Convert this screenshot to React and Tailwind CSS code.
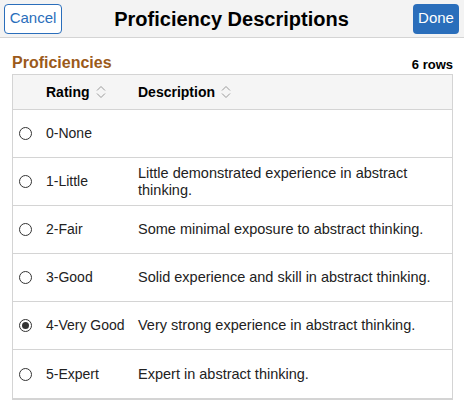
import React from "react";

const rows = [
  { rating: "0-None", desc: "" },
  { rating: "1-Little", desc: "Little demonstrated experience in abstract thinking." },
  { rating: "2-Fair", desc: "Some minimal exposure to abstract thinking." },
  { rating: "3-Good", desc: "Solid experience and skill in abstract thinking." },
  { rating: "4-Very Good", desc: "Very strong experience in abstract thinking.", checked: true },
  { rating: "5-Expert", desc: "Expert in abstract thinking." },
];

const SortIcon = () => (
  <svg width="10" height="14" viewBox="0 0 10 14" className="ml-[6px] inline-block align-[-2px]" fill="none" stroke="#9a9a9a" strokeWidth="1">
    <path d="M1 5.5 L5 1.5 L9 5.5" />
    <path d="M1 8.5 L5 12.5 L9 8.5" />
  </svg>
);

const Radio = ({ checked }) => (
  <span className="flex h-[13px] w-[13px] items-center justify-center rounded-full border border-[#333] bg-white">
    {checked && <span className="h-[7px] w-[7px] rounded-full bg-[#333]"></span>}
  </span>
);

const App = () => {
  return (
    <div className="h-[408px] w-[464px] bg-white text-[#222] font-['Liberation_Sans',Arial,sans-serif]">
      <div className="grid h-[38px] grid-cols-[1fr_auto_1fr] items-center border-b border-[#d4d4d4] bg-[#f3f3f3] pl-[4px] pr-[5px]">
        <div>
          <button className="h-[30px] w-[58px] rounded-[4px] border border-[#2a6ebb] bg-white text-[15px] text-[#2a6ebb]">
            Cancel
          </button>
        </div>
        <h1 className="text-[20px] font-bold text-black">Proficiency Descriptions</h1>
        <div className="flex justify-end">
          <button className="h-[30px] w-[46px] rounded-[4px] bg-[#2a6ebb] text-[15px] text-white">
            Done
          </button>
        </div>
      </div>

      <div className="pl-[12px] pr-[11px] pt-[15px]">
        <div className="flex items-end justify-between">
          <span className="text-[16px] font-bold leading-[20px] text-[#9b5a1a]">Proficiencies</span>
          <span className="text-[13px] font-bold leading-[16px] text-black">6 rows</span>
        </div>

        <div className="mt-[1px] border border-b-2 border-[#d4d4d4]">
          <div className="flex h-[35px] items-center border-b border-[#d4d4d4] bg-[#f5f5f5] text-[14px] font-bold text-black">
            <div className="w-[125px] pl-[33px]">
              Rating
              <SortIcon />
            </div>
            <div>
              Description
              <SortIcon />
            </div>
          </div>
          {rows.map((r, i) => (
            <div
              key={r.rating}
              className={`flex h-[48px] items-center text-[14px] ${i < rows.length - 1 ? "border-b border-[#d4d4d4]" : ""}`}
            >
              <div className="flex w-[33px] pl-[6px]">
                <Radio checked={r.checked} />
              </div>
              <div className="w-[92px]">{r.rating}</div>
              <div className="w-[300px] text-[14.5px] leading-[17px]">{r.desc}</div>
            </div>
          ))}
        </div>
      </div>
    </div>
  );
};

export default App;
